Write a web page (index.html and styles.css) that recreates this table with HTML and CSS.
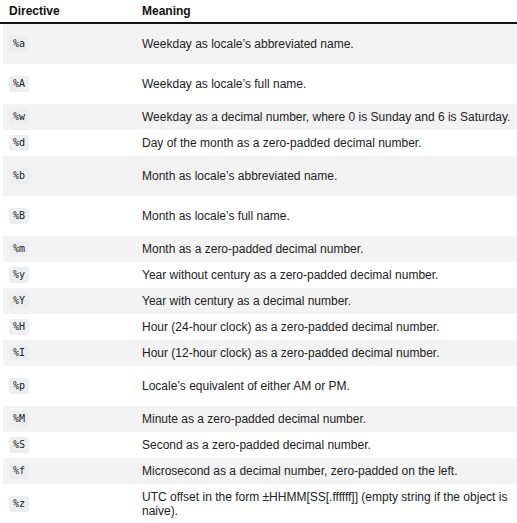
FILE: index.html
```html
<!DOCTYPE html>
<html>
<head>
<meta charset="utf-8">
<link rel="stylesheet" href="styles.css">
</head>
<body>
<div class="table">
  <div class="head">
    <div class="c1">Directive</div>
    <div class="c2">Meaning</div>
  </div>
  <div class="rows">
    <div class="row tall odd"><div class="c1"><code>%a</code></div><div class="c2">Weekday as locale’s abbreviated name.</div></div>
    <div class="row tall"><div class="c1"><code>%A</code></div><div class="c2">Weekday as locale’s full name.</div></div>
    <div class="row odd"><div class="c1"><code>%w</code></div><div class="c2">Weekday as a decimal number, where 0 is Sunday and 6 is Saturday.</div></div>
    <div class="row"><div class="c1"><code>%d</code></div><div class="c2">Day of the month as a zero-padded decimal number.</div></div>
    <div class="row tall odd"><div class="c1"><code>%b</code></div><div class="c2">Month as locale’s abbreviated name.</div></div>
    <div class="row tall"><div class="c1"><code>%B</code></div><div class="c2">Month as locale’s full name.</div></div>
    <div class="row odd"><div class="c1"><code>%m</code></div><div class="c2">Month as a zero-padded decimal number.</div></div>
    <div class="row"><div class="c1"><code>%y</code></div><div class="c2">Year without century as a zero-padded decimal number.</div></div>
    <div class="row odd"><div class="c1"><code>%Y</code></div><div class="c2">Year with century as a decimal number.</div></div>
    <div class="row"><div class="c1"><code>%H</code></div><div class="c2">Hour (24-hour clock) as a zero-padded decimal number.</div></div>
    <div class="row odd"><div class="c1"><code>%I</code></div><div class="c2">Hour (12-hour clock) as a zero-padded decimal number.</div></div>
    <div class="row tall"><div class="c1"><code>%p</code></div><div class="c2">Locale’s equivalent of either AM or PM.</div></div>
    <div class="row odd"><div class="c1"><code>%M</code></div><div class="c2">Minute as a zero-padded decimal number.</div></div>
    <div class="row"><div class="c1"><code>%S</code></div><div class="c2">Second as a zero-padded decimal number.</div></div>
    <div class="row odd"><div class="c1"><code>%f</code></div><div class="c2">Microsecond as a decimal number, zero-padded on the left.</div></div>
    <div class="row tall"><div class="c1"><code>%z</code></div><div class="c2">UTC offset in the form ±HHMM[SS[.ffffff]] (empty string if the object is naive).</div></div>
  </div>
</div>
</body>
</html>
```
FILE: styles.css
```css
html, body {
  margin: 0;
  padding: 0;
  background: #fff;
}
body {
  font-family: "Liberation Sans", Arial, sans-serif;
  font-size: 12px;
  color: #222;
}
.table {
  width: 517px;
}
.head {
  display: flex;
  height: 22px;
  align-items: center;
  border-bottom: 2px solid #111;
  font-weight: bold;
  color: #111;
}
.head .c1 {
  width: 133px;
  padding-left: 9px;
}
.head .c2 {
  flex: 1;
}
.rows {
  padding-left: 3px;
}
.row {
  display: flex;
  align-items: center;
  height: 26px;
  background: #fff;
}
.row.tall {
  height: 40px;
}
.row.odd {
  background: #f3f3f3;
}
.row .c1 {
  width: 133px;
  padding-left: 6px;
  flex: none;
}
.row .c2 {
  flex: 1;
  padding-right: 1px;
  line-height: 14px;
}
code {
  display: inline-block;
  font-family: "DejaVu Sans Mono", "Liberation Mono", monospace;
  font-size: 10px;
  line-height: 16px;
  height: 16px;
  padding: 0 4px;
  background: #eceef0;
  border-radius: 3px;
  color: #222;
}
```
